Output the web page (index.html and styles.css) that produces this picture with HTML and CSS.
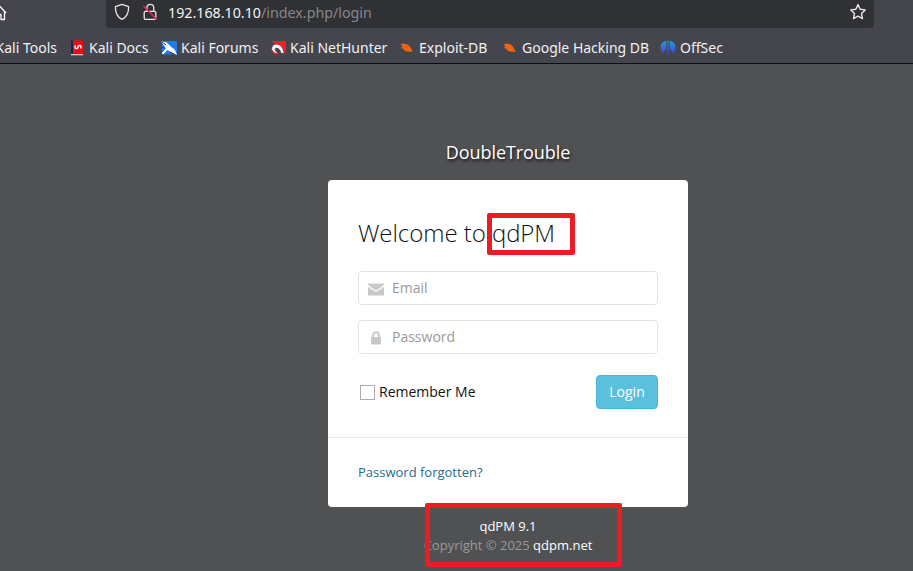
FILE: index.html
```html
<!DOCTYPE html>
<html lang="en">
<head>
<meta charset="utf-8">
<title>qdPM | Login</title>
<link rel="stylesheet" href="styles.css">
</head>
<body>
<header class="browser">
  <div class="nav">
    <svg class="home" width="16" height="22" viewBox="0 0 16 22" fill="none" stroke="#fbfbfe" stroke-width="1.3" stroke-linejoin="round"><path d="M-8 13 L-1 5.5 L6 13 M4.5 11.5 V19.5 H1 V15 Q1 14.5 .5 14.5 H-2"/></svg>
    <div class="urlbar">
      <svg class="shield" width="18" height="18" viewBox="0 0 18 18" fill="none" stroke="#e6e6ea" stroke-width="1.3" stroke-linejoin="round"><path d="M9 1.3 L15.6 3.7 C15.8 9 14.3 13.6 9 16.4 C3.7 13.6 2.2 9 2.4 3.7 Z"/></svg>
      <svg class="insecure" width="16" height="18" viewBox="0 0 16 18" fill="none"><path d="M4.9 8 V4.8 A3.4 3.4 0 0 1 11.7 4.8 V8 M3.5 8.3 H12.5 Q13.8 8.3 13.8 9.6 V15 Q13.8 16.3 12.5 16.3 H3.5 Q2.2 16.3 2.2 15 V9.6 Q2.2 8.3 3.5 8.3 Z" stroke="#e6e6ea" stroke-width="1.3"/><path d="M1.2 2.8 L14.6 16.4" stroke="#e22850" stroke-width="1.5"/></svg>
      <div class="address"><span class="host">192.168.10.10</span>/index.php/login</div>
      <svg class="star" width="18" height="18" viewBox="0 0 18 18" fill="none" stroke="#e6e6ea" stroke-width="1.4" stroke-linejoin="round"><path d="M9 1.6 L11.2 6.3 L16.2 6.9 L12.5 10.4 L13.5 15.6 L9 13.1 L4.5 15.6 L5.5 10.4 L1.8 6.9 L6.8 6.3 Z"/></svg>
    </div>
  </div>
  <nav class="bookmarks">
    <a class="mark cut"><span>Kali Tools</span></a>
    <a class="mark"><svg width="16" height="16" viewBox="0 0 16 16"><path d="M2 .5H14V14H2z" fill="#ee0a14"/><path d="M2 .5H4V14H2z" fill="#1d2350"/><path d="M2 14H14v1.3H2z" fill="#d8c8cc"/><path d="M6.3 5.5Q5.3 8.5 7.2 8.5T9 7T10.8 5.5T11.8 8.5" fill="none" stroke="#fff" stroke-width="1.4"/></svg><span>Kali Docs</span></a>
    <a class="mark"><svg width="16" height="16" viewBox="0 0 16 16"><path d="M1 1H16V14.5H3L1 11z" fill="#2178e8"/><path d="M0 1.2L5.5 2.5L9.8 6.5L14 10L16 15L10 12.3L6.5 10L2 14.5L.6 13.2L5 8.5Z" fill="#fff"/><path d="M.5 1.5L5 5M3 8L1.2 7M9 12L14 14.8" stroke="#25282f" stroke-width="1" fill="none"/></svg><span>Kali Forums</span></a>
    <a class="mark"><svg width="16" height="16" viewBox="0 0 16 16"><path d="M2 1H16V12L10 9Z" fill="#f51d2a"/><path d="M1.5 9.5Q2 3.6 7 4.2Q12.5 5 14.3 13L11.3 13.5Q9.5 8 6.6 8Q4.8 8 5.2 10Q6 12.5 9 13.5Q2 14.5 1.5 9.5Z" fill="#fff" stroke="#24252b" stroke-width=".5"/><path d="M9 14Q3 14 2 10M13 10L16 14" stroke="#e91b2b" stroke-width="1.1" fill="none"/></svg><span>Kali NetHunter</span></a>
    <a class="mark"><svg width="16" height="16" viewBox="0 0 16 16"><path d="M1.5 4.5L5 3.4Q9 4 11 6.5L13.7 11.7L9.5 11.8L6 11L4.5 9L2 8L3.4 6.6Z" fill="#ef6312"/></svg><span>Exploit-DB</span></a>
    <a class="mark"><svg width="16" height="16" viewBox="0 0 16 16"><path d="M1.5 4.5L5 3.4Q9 4 11 6.5L13.7 11.7L9.5 11.8L6 11L4.5 9L2 8L3.4 6.6Z" fill="#ef6312"/></svg><span>Google Hacking DB</span></a>
    <a class="mark"><svg width="16" height="16" viewBox="0 0 16 16"><defs><linearGradient id="off" x2="0" y2="1"><stop stop-color="#16a3d5"/><stop offset="1" stop-color="#5b2ee0"/></linearGradient></defs><path d="M6.2 .7Q0 2 .5 8Q1 11.5 3.5 13.5Q3.8 10.5 6.2 9Z M9.8 .7Q16 2 15.5 8Q15 11.5 12.5 13.5Q12.2 10.5 9.8 9Z M7.4 .5H8.6V15.5H7.4Z" fill="url(#off)"/></svg><span>OffSec</span></a>
  </nav>
</header>
<main class="login">
  <h1 class="app-name"><span>DoubleTrouble</span></h1>
  <form class="card">
    <h2 class="welcome"><span>Welcome to qdPM</span></h2>
    <div class="field">
      <svg width="16" height="16" viewBox="0 0 16 16" fill="#c9c9c9"><path d="M0 2.5H16V3.8Q13 6.6 9.5 8.7Q8 9.7 6.5 8.7Q3 6.6 0 3.8Z M0 5.4Q3 8 6 9.9Q8 11.1 10 9.9Q13 8 16 5.4V14.5H0Z"/></svg>
      <span>Email</span>
    </div>
    <div class="field">
      <svg width="16" height="16" viewBox="0 0 16 16"><path d="M5 8V5.2A3 3 0 0 1 11 5.2V8" fill="none" stroke="#c9c9c9" stroke-width="1.9"/><rect x="3" y="7" width="10" height="7.5" rx=".8" fill="#c9c9c9"/></svg>
      <span>Password</span>
    </div>
    <div class="actions">
      <label class="remember"><i class="box"></i><span>Remember Me</span></label>
      <button class="submit" type="button">Login</button>
    </div>
    <div class="forgot"><a>Password forgotten?</a></div>
    <div class="highlight name-mark"></div>
  </form>
  <footer class="copyright">
    <div class="version"><a>qdPM 9.1</a></div>
    <div class="owner">Copyright © 2025 <a>qdpm.net</a></div>
    <div class="highlight version-mark"></div>
  </footer>
</main>
</body>
</html>
```
FILE: styles.css
```css
* { box-sizing: border-box; }
body {
  margin: 0;
  height: 571px;
  overflow: hidden;
  background: #505153;
  color: #111;
  font: 14px/20px "Open Sans", sans-serif;
}
svg { display: block; flex: none; overflow: visible; }

.browser {
  height: 64px;
  background: #45464d;
  border-bottom: 1px solid #0d0d14;
  color: #f0f0f3;
  font: 14.25px/20px "Noto Sans", sans-serif;
}
.nav { display: flex; height: 28px; }
.home { width: 16px; }
.urlbar {
  display: flex;
  align-items: flex-start;
  width: 768px;
  margin-left: 90px;
  padding: 3px 7px 0;
  background: #303135;
  border-radius: 0 0 4px 4px;
}
.insecure { margin-left: 11px; }
.address { margin: 0 auto 0 10px; color: #86868b; white-space: nowrap; }
.host { color: #f4f4f7; }
.bookmarks {
  display: grid;
  grid-template-columns: 69px 92px 109px 129px 103px 158px auto;
  height: 35px;
  padding-top: 9px;
}
.mark { display: flex; align-items: center; gap: 4px; height: 22px; font-size: 14px; white-space: nowrap; }
.cut { justify-content: flex-end; padding-right: 12px; }

.login { width: 360px; margin-left: 328px; }
.app-name {
  margin: 0;
  padding-top: 76px;
  height: 116px;
  color: #fff;
  font-size: 18px;
  font-weight: 400;
  line-height: 24px;
  letter-spacing: -.07px;
  text-align: center;
  text-shadow: 1px 2px 3px rgba(0, 0, 0, .8);
}
.card { position: relative; height: 327px; padding: 38px 30px 0; background: #fff; border-radius: 4px; }
.welcome { margin: 0 0 23px; font-size: 24px; font-weight: 300; line-height: 30px; letter-spacing: -.05px; }
.field {
  display: flex;
  align-items: center;
  height: 34px;
  margin-bottom: 15px;
  padding: 0 9px;
  gap: 8px;
  border: 1px solid #e3e3e3;
  border-radius: 4px;
  color: #999;
}
.field svg { margin-top: 2px; }
.actions { display: flex; justify-content: space-between; align-items: center; margin-top: 21px; }
.remember { display: flex; align-items: center; gap: 4px; padding-left: 2px; }
.box { width: 15px; height: 15px; border: 1px solid #aaa; background: #fff; }
.submit {
  width: 62px;
  height: 34px;
  padding: 0;
  border: 1px solid #46b8da;
  border-radius: 4px;
  background: #5bc0de;
  color: #fff;
  font: inherit;
}
.forgot {
  margin: 28px -30px 0;
  padding: 24px 30px 0;
  border-top: 1px solid #e9e9e9;
  color: #1a6c92;
  font-size: 13px;
}
.copyright {
  position: relative;
  padding-top: 10px;
  color: #999;
  font-size: 13px;
  line-height: 19px;
  text-align: center;
}
.copyright a { color: #fff; }
.highlight { position: absolute; border: 5px solid #ed1c24; border-radius: 2px; }
.name-mark { left: 159px; top: 33px; width: 88px; height: 42px; }
.version-mark { left: 97px; top: -4px; width: 197px; height: 64px; }
```
